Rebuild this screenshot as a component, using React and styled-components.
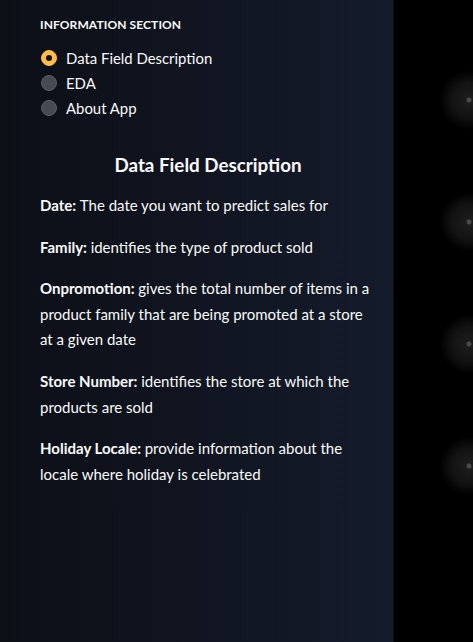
import styled, { createGlobalStyle } from "styled-components";

const options = ["Data Field Description", "EDA", "About App"];

const fields = [
	{ name: "Date:", text: "The date you want to predict sales for" },
	{ name: "Family:", text: "identifies the type of product sold" },
	{ name: "Onpromotion:", text: "gives the total number of items in a product family that are being promoted at a store at a given date" },
	{ name: "Store Number:", text: "identifies the store at which the products are sold" },
	{ name: "Holiday Locale:", text: "provide information about the locale where holiday is celebrated" },
];

const glows = [0, 1, 2, 3];

const App = () => {
	return (<>
		<GlobalStyle />
		<Layout>
			<Sidebar>
				<SectionTitle>INFORMATION SECTION</SectionTitle>
				<RadioGroup>
					{options.map((o, i) => (
						<RadioRow key={o}>
							<RadioDot $checked={i === 0} />
							<RadioLabel>{o}</RadioLabel>
						</RadioRow>
					))}
				</RadioGroup>
				<Heading>Data Field Description</Heading>
				{fields.map((f) => (
					<Field key={f.name}>
						<strong>{f.name} </strong>{f.text}
					</Field>
				))}
			</Sidebar>
			<Main>
				{glows.map((g) => (
					<Glow key={g} />
				))}
			</Main>
		</Layout>
	</>);
};

const GlobalStyle = createGlobalStyle`
	html, body {
		margin: 0;
		padding: 0;
		background: #000;
	}
	body {
		font-family: Lato, "Liberation Sans", sans-serif;
		color: #fafafa;
	}
`;

const Layout = styled.div`
	display: flex;
	height: 642px;
	overflow: hidden;
`;

const Sidebar = styled.aside`
	width: 394px;
	flex-shrink: 0;
	box-sizing: border-box;
	padding: 16px 17px 0 40px;
	background: linear-gradient(to right, #0c0f16, #141b2b);
	border-right: 1px solid #0a0d14;
`;

const SectionTitle = styled.div`
	font-size: 12px;
	font-weight: 700;
	line-height: 18px;
	letter-spacing: 0.1px;
`;

const RadioGroup = styled.div`
	display: flex;
	flex-direction: column;
	margin-top: 11px;
`;

const RadioRow = styled.div`
	display: flex;
	align-items: center;
	gap: 9px;
	height: 25px;
	padding-left: 1px;
`;

const RadioDot = styled.span`
	width: 16px;
	height: 16px;
	box-sizing: border-box;
	border-radius: 50%;
	background: ${(p) => (p.$checked ? "#ffbd45" : "#474953")};
	border: 1px solid ${(p) => (p.$checked ? "#ffbd45" : "#5c5e68")};
	display: flex;
	align-items: center;
	justify-content: center;

	&::after {
		content: "";
		display: ${(p) => (p.$checked ? "block" : "none")};
		width: 6px;
		height: 6px;
		border-radius: 50%;
		background: #0e1117;
	}
`;

const RadioLabel = styled.span`
	font-size: 14.9px;
	line-height: 18px;
`;

const Heading = styled.h3`
	margin: 32px 0 15px;
	text-align: center;
	font-size: 18.8px;
	font-weight: 700;
	line-height: 26px;
`;

const Field = styled.p`
	margin: 0 0 16px;
	font-size: 15px;
	line-height: 25.6px;

	strong {
		font-weight: 700;
	}
`;

const Main = styled.main`
	flex: 1;
	display: flex;
	flex-direction: column;
	align-items: flex-end;
	gap: 62px;
	padding-top: 70px;
	margin-right: -26px;
`;

const Glow = styled.div`
	width: 60px;
	height: 60px;
	flex-shrink: 0;
	border-radius: 50%;
	background: radial-gradient(circle, #4a4a4a 0, #4a4a4a 2px, #1c1c1c 3px, #131313 40%, rgba(0, 0, 0, 0) 70%);
`;

export default App;
